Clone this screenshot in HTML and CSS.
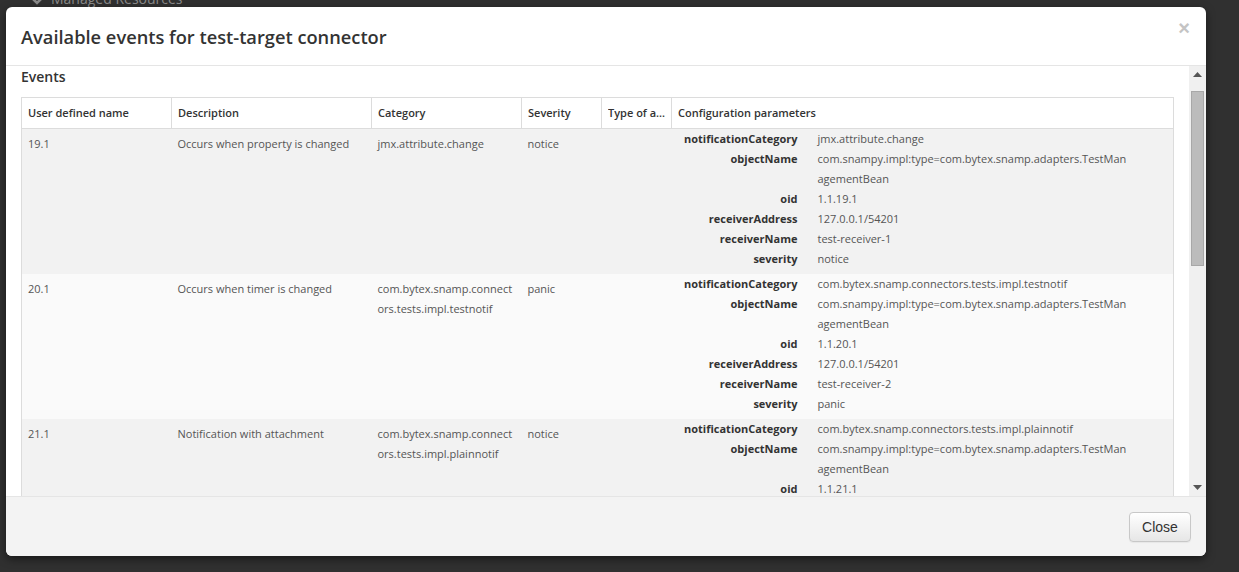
FILE: index.html
```html
<!DOCTYPE html>
<html>
<head>
<meta charset="utf-8">
<link rel="stylesheet" href="styles.css">
</head>
<body>
<div class="page">
  <div class="behind">
    <svg class="chev" width="14" height="9" viewBox="0 0 14 9"><path d="M1.5 1.5 L7 7 L12.5 1.5" fill="none" stroke="#8a8a8a" stroke-width="2.6"/></svg>
    <span>Managed Resources</span>
  </div>
</div>
<div class="modal">
  <div class="modal-header">
    <h4 class="modal-title">Available events for test-target connector</h4>
    <span class="close">×</span>
  </div>
  <div class="modal-body-wrap">
    <div class="modal-body">
      <h5 class="section">Events</h5>
      <table class="events">
        <colgroup>
          <col class="c1"><col class="c2"><col class="c3"><col class="c4"><col class="c5"><col class="c6">
        </colgroup>
        <thead>
          <tr>
            <th>User defined name</th>
            <th>Description</th>
            <th>Category</th>
            <th>Severity</th>
            <th class="th-ell"><div class="ell">Type of attachment</div></th>
            <th>Configuration parameters</th>
          </tr>
        </thead>
        <tbody>
          <tr class="odd">
            <td>19.1</td>
            <td>Occurs when property is changed</td>
            <td class="brk">jmx.attribute.change</td>
            <td>notice</td>
            <td></td>
            <td class="cfg">
              <dl class="params">
                <dt>notificationCategory</dt><dd>jmx.attribute.change</dd>
                <dt>objectName</dt><dd>com.snampy.impl:type=com.bytex.snamp.adapters.TestManagementBean</dd>
                <dt>oid</dt><dd>1.1.19.1</dd>
                <dt>receiverAddress</dt><dd>127.0.0.1/54201</dd>
                <dt>receiverName</dt><dd>test-receiver-1</dd>
                <dt>severity</dt><dd>notice</dd>
              </dl>
            </td>
          </tr>
          <tr class="even">
            <td>20.1</td>
            <td>Occurs when timer is changed</td>
            <td class="brk">com.bytex.snamp.connectors.tests.impl.testnotif</td>
            <td>panic</td>
            <td></td>
            <td class="cfg">
              <dl class="params">
                <dt>notificationCategory</dt><dd>com.bytex.snamp.connectors.tests.impl.testnotif</dd>
                <dt>objectName</dt><dd>com.snampy.impl:type=com.bytex.snamp.adapters.TestManagementBean</dd>
                <dt>oid</dt><dd>1.1.20.1</dd>
                <dt>receiverAddress</dt><dd>127.0.0.1/54201</dd>
                <dt>receiverName</dt><dd>test-receiver-2</dd>
                <dt>severity</dt><dd>panic</dd>
              </dl>
            </td>
          </tr>
          <tr class="odd">
            <td>21.1</td>
            <td>Notification with attachment</td>
            <td class="brk">com.bytex.snamp.connectors.tests.impl.plainnotif</td>
            <td>notice</td>
            <td></td>
            <td class="cfg">
              <dl class="params">
                <dt>notificationCategory</dt><dd>com.bytex.snamp.connectors.tests.impl.plainnotif</dd>
                <dt>objectName</dt><dd>com.snampy.impl:type=com.bytex.snamp.adapters.TestManagementBean</dd>
                <dt>oid</dt><dd>1.1.21.1</dd>
                <dt>receiverAddress</dt><dd>127.0.0.1/54201</dd>
                <dt>receiverName</dt><dd>test-receiver-3</dd>
                <dt>severity</dt><dd>notice</dd>
              </dl>
            </td>
          </tr>
        </tbody>
      </table>
    </div>
    <div class="vscroll">
      <svg class="arrow" width="9" height="5" viewBox="0 0 9 5"><path d="M0 5 L4.5 0 L9 5 Z" fill="#555"/></svg>
      <div class="track"><div class="thumb"></div></div>
      <svg class="arrow" width="9" height="5" viewBox="0 0 9 5"><path d="M0 0 L4.5 5 L9 0 Z" fill="#555"/></svg>
    </div>
  </div>
  <div class="modal-footer">
    <button class="btn">Close</button>
  </div>
</div>
</body>
</html>
```

FILE: styles.css
```css
html, body {
  margin: 0;
  padding: 0;
  height: 100%;
  background: #303030;
  overflow: hidden;
  font-family: "Open Sans", "DejaVu Sans", sans-serif;
}

.page {
  height: 100%;
}

.behind {
  display: flex;
  align-items: center;
  gap: 7px;
  padding-left: 30px;
  margin-top: -11px;
  color: #8a8a8a;
  font-size: 14px;
  line-height: 20px;
}

.chev {
  display: block;
  margin-top: 2px;
}

.modal {
  position: absolute;
  left: 6px;
  top: 7px;
  width: 1200px;
  height: 549px;
  background: #fff;
  border-radius: 6px;
  display: flex;
  flex-direction: column;
  overflow: hidden;
  box-shadow: 0 3px 9px rgba(0,0,0,0.5);
}

.modal-header {
  height: 58px;
  border-bottom: 1px solid #e5e5e5;
  display: flex;
  align-items: center;
  justify-content: space-between;
  padding: 0 16px 0 15px;
  flex: none;
}

.modal-title {
  margin: 0;
  font-size: 18.25px;
  font-weight: 600;
  color: #333;
  letter-spacing: 0;
}

.close {
  font-size: 20px;
  font-weight: 700;
  color: #c4c4c4;
  line-height: 1;
  margin-top: -17px;
  font-family: "Liberation Sans", Arial, sans-serif;
}

.modal-body-wrap {
  flex: 1;
  display: flex;
  min-height: 0;
  border-bottom: 1px solid #e5e5e5;
}

.modal-body {
  flex: 1;
  overflow: hidden;
  padding: 0 15px;
}

.section {
  margin: 0;
  padding-top: 1px;
  height: 30px;
  line-height: 20px;
  font-size: 14px;
  font-weight: 600;
  color: #333;
}

.events {
  border-collapse: collapse;
  table-layout: fixed;
  width: 1153px;
  font-size: 11px;
  color: #555;
  border: 1px solid #dcdcdc;
}

.c1 { width: 150px; }
.c2 { width: 200px; }
.c3 { width: 150px; }
.c4 { width: 80px; }
.c5 { width: 70px; }
.c6 { width: auto; }

.events th {
  text-align: left;
  font-weight: 600;
  color: #333;
  height: 29px;
  padding: 0 6px 1px;
  border: 1px solid #dcdcdc;
  background: #fff;
  white-space: nowrap;
}

.events th.th-ell {
  padding-right: 2px;
}

.ell {
  overflow: hidden;
  text-overflow: ellipsis;
  white-space: nowrap;
}

.events td {
  vertical-align: top;
  padding: 5px 6px 7px;
  line-height: 20px;
}

.events td.brk {
  word-break: break-all;
}

.odd td { background: #f2f2f2; }
.even td { background: #fafafa; }

.events td.cfg {
  padding: 0 6px 5px;
}

.params {
  margin: 0;
  display: grid;
  grid-template-columns: 120px 314px;
  column-gap: 20px;
  line-height: 20px;
}

.params dt {
  text-align: right;
  font-weight: 700;
  color: #333;
  white-space: nowrap;
}

.params dd {
  margin: 0;
  word-break: break-all;
}

.vscroll {
  width: 17px;
  flex: none;
  background: #f0f0f0;
  display: flex;
  flex-direction: column;
  align-items: center;
  padding: 6px 0 6px;
  box-sizing: border-box;
}

.arrow {
  display: block;
  flex: none;
}

.track {
  flex: 1;
  width: 100%;
  display: flex;
  flex-direction: column;
  padding-top: 14px;
}

.thumb {
  margin-left: 2px;
  width: 11px;
  height: 173px;
  background: #bcbcbc;
  border: 1px solid #a8a8a8;
}

.modal-footer {
  height: 59px;
  flex: none;
  background: #f3f3f3;
  display: flex;
  align-items: center;
  justify-content: flex-end;
  padding-right: 15px;
}

.btn {
  font-family: "Liberation Sans", Arial, sans-serif;
  font-size: 14px;
  color: #333;
  height: 30px;
  width: 62px;
  padding: 0 0 1px;
  border: 1px solid #c8c8c8;
  border-radius: 4px;
  background: linear-gradient(#ffffff, #e6e6e6);
  box-shadow: inset 0 1px 0 rgba(255,255,255,0.2), 0 1px 1px rgba(0,0,0,0.05);
  margin-top: 1px;
}
```
